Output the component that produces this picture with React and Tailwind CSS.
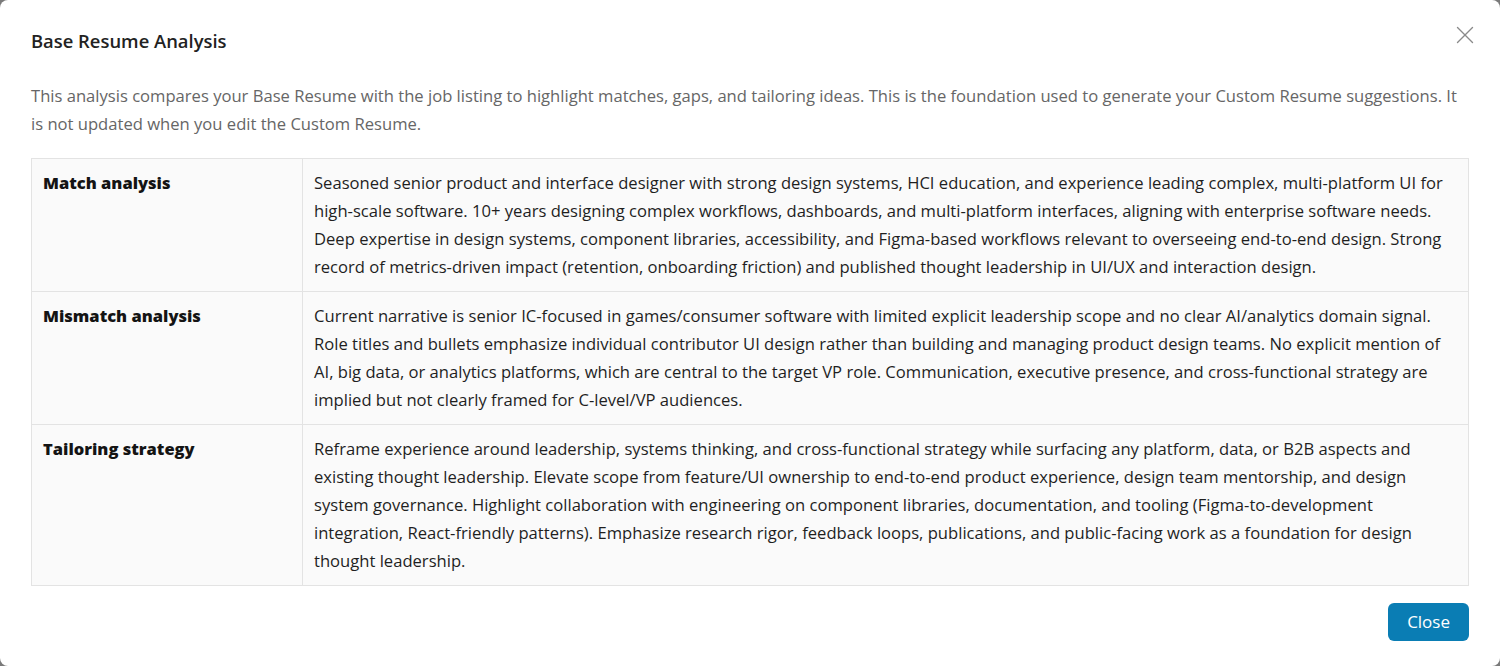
import React from "react";
import { X } from "lucide-react";

const rows = [
  {
    label: "Match analysis",
    text: "Seasoned senior product and interface designer with strong design systems, HCI education, and experience leading complex, multi-platform UI for high-scale software. 10+ years designing complex workflows, dashboards, and multi-platform interfaces, aligning with enterprise software needs. Deep expertise in design systems, component libraries, accessibility, and Figma-based workflows relevant to overseeing end-to-end design. Strong record of metrics-driven impact (retention, onboarding friction) and published thought leadership in UI/UX and interaction design.",
  },
  {
    label: "Mismatch analysis",
    text: "Current narrative is senior IC-focused in games/consumer software with limited explicit leadership scope and no clear AI/analytics domain signal. Role titles and bullets emphasize individual contributor UI design rather than building and managing product design teams. No explicit mention of AI, big data, or analytics platforms, which are central to the target VP role. Communication, executive presence, and cross-functional strategy are implied but not clearly framed for C-level/VP audiences.",
  },
  {
    label: "Tailoring strategy",
    text: "Reframe experience around leadership, systems thinking, and cross-functional strategy while surfacing any platform, data, or B2B aspects and existing thought leadership. Elevate scope from feature/UI ownership to end-to-end product experience, design team mentorship, and design system governance. Highlight collaboration with engineering on component libraries, documentation, and tooling (Figma-to-development integration, React-friendly patterns). Emphasize research rigor, feedback loops, publications, and public-facing work as a foundation for design thought leadership.",
  },
];

export default function App() {
  return (
    <div className="h-[666px] w-[1500px] overflow-hidden bg-[#7a7a7a] font-['Open_Sans',sans-serif]">
      <div className="flex h-full flex-col rounded-lg bg-white px-[31px]">
        <div className="flex h-[31px] items-center justify-between mt-[25px]">
          <h2 className="text-[18.4px] font-semibold text-[#222]">Base Resume Analysis</h2>
          <button className="-mr-[11px] -mt-[12px] text-[#8a8a8a]">
            <X size={30} strokeWidth={1.1} />
          </button>
        </div>
        <p className="mt-[26px] text-[16.6px] leading-[28px] text-[#666]">
          This analysis compares your Base Resume with the job listing to highlight matches, gaps, and tailoring ideas. This is the foundation used to generate your Custom Resume suggestions. It is not updated when you edit the Custom Resume.
        </p>
        <table className="mt-[20px] w-full border-collapse bg-[#fafafa]">
          <tbody>
            {rows.map((row, i) => (
              <tr key={i}>
                <td className="w-[271px] border border-[#e3e3e3] px-[11px] pt-[10px] pb-[10px] align-top text-[16.5px] font-extrabold leading-[28px] text-[#141414]">
                  {row.label}
                </td>
                <td className="border border-[#e3e3e3] px-[11px] pt-[10px] pb-[10px] align-top text-[16.6px] leading-[28px] text-[#1f1f1f]">
                  {row.text}
                </td>
              </tr>
            ))}
          </tbody>
        </table>
        <div className="mt-[17px] flex justify-end">
          <button className="h-[38px] rounded-md bg-[#0a7db4] px-[19px] text-[17px] text-white">
            Close
          </button>
        </div>
      </div>
    </div>
  );
}
